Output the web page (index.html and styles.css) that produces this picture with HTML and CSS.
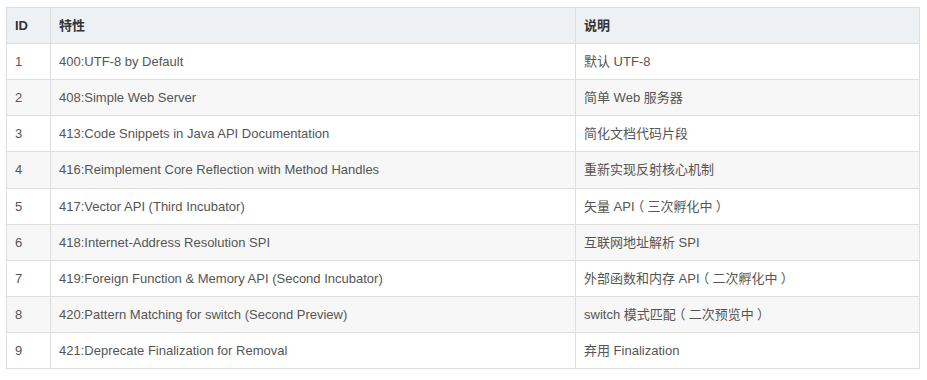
FILE: index.html
```html
<!DOCTYPE html>
<html lang="zh">
<head>
<meta charset="utf-8">
<link rel="stylesheet" href="styles.css">
</head>
<body>
<table class="jdk-table">
  <colgroup>
    <col class="c-id">
    <col class="c-feat">
    <col class="c-desc">
  </colgroup>
  <thead>
    <tr><th>ID</th><th>特性</th><th>说明</th></tr>
  </thead>
  <tbody>
    <tr><td>1</td><td>400:UTF-8 by Default</td><td>默认 UTF-8</td></tr>
    <tr><td>2</td><td>408:Simple Web Server</td><td>简单 Web 服务器</td></tr>
    <tr><td>3</td><td>413:Code Snippets in Java API Documentation</td><td>简化文档代码片段</td></tr>
    <tr class="tall"><td>4</td><td>416:Reimplement Core Reflection with Method Handles</td><td>重新实现反射核心机制</td></tr>
    <tr><td>5</td><td>417:Vector API (Third Incubator)</td><td>矢量 API<span class="paren">（</span>三次孵化中<span class="paren">）</span></td></tr>
    <tr><td>6</td><td>418:Internet-Address Resolution SPI</td><td>互联网地址解析 SPI</td></tr>
    <tr><td>7</td><td>419:Foreign Function &amp; Memory API (Second Incubator)</td><td>外部函数和内存 API<span class="paren">（</span>二次孵化中<span class="paren">）</span></td></tr>
    <tr><td>8</td><td>420:Pattern Matching for switch (Second Preview)</td><td>switch 模式匹配<span class="paren">（</span>二次预览中<span class="paren">）</span></td></tr>
    <tr><td>9</td><td>421:Deprecate Finalization for Removal</td><td>弃用 Finalization</td></tr>
  </tbody>
</table>
</body>
</html>
```
FILE: styles.css
```css
html, body {
  margin: 0;
  padding: 0;
  background: #ffffff;
}
body {
  padding: 7px 8px 0 6px;
  font-family: "Liberation Sans", Arial, "Noto Sans CJK SC", sans-serif;
  font-size: 13px;
  color: #555;
}
.jdk-table {
  border-collapse: collapse;
  width: 913px;
  table-layout: fixed;
}
.c-id { width: 44px; }
.c-feat { width: 525px; }
.c-desc { width: 344px; }
.jdk-table th,
.jdk-table td {
  border: 1px solid #dddddd;
  height: 36px;
  box-sizing: border-box;
  padding: 0 8px;
  line-height: 20px;
  text-align: left;
  vertical-align: middle;
  white-space: nowrap;
}
.jdk-table tr.tall td {
  height: 37px;
}
.jdk-table th {
  background: #eef1f4;
  font-weight: bold;
  color: #333;
}
.jdk-table tbody tr:nth-child(even) td {
  background: #f7f7f7;
}
.paren {
  display: inline-block;
  width: 13px;
  text-align: center;
  font-family: "Noto Sans CJK SC", sans-serif;
  font-feature-settings: "halt" 1;
}
```
